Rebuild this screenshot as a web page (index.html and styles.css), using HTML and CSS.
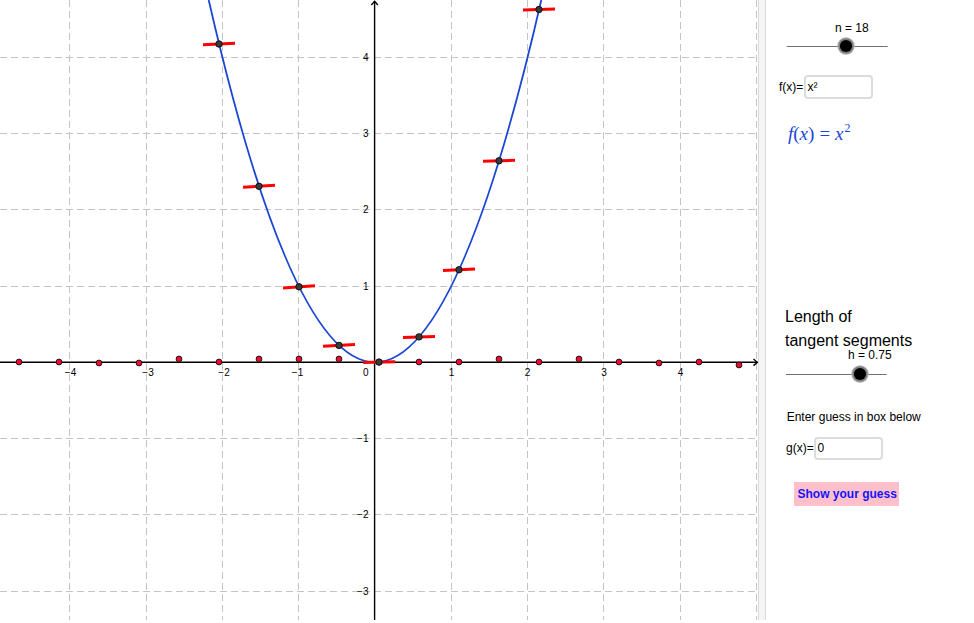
FILE: index.html
```html
<!DOCTYPE html>
<html>
<head>
<meta charset="utf-8">
<link rel="stylesheet" href="styles.css">
</head>
<body>
<div class="app">
  <div class="graph">
    <svg width="758" height="620" viewBox="0 0 758 620" xmlns="http://www.w3.org/2000/svg">
      <g class="grid">
        <line x1="69.5" y1="0" x2="69.5" y2="620"/>
        <line x1="146.5" y1="0" x2="146.5" y2="620"/>
        <line x1="222.5" y1="0" x2="222.5" y2="620"/>
        <line x1="298.5" y1="0" x2="298.5" y2="620"/>
        <line x1="451.5" y1="0" x2="451.5" y2="620"/>
        <line x1="527.5" y1="0" x2="527.5" y2="620"/>
        <line x1="603.5" y1="0" x2="603.5" y2="620"/>
        <line x1="680.5" y1="0" x2="680.5" y2="620"/>
        <line x1="756.5" y1="0" x2="756.5" y2="620"/>
        <line x1="0" y1="57.5" x2="758" y2="57.5"/>
        <line x1="0" y1="133.5" x2="758" y2="133.5"/>
        <line x1="0" y1="209.5" x2="758" y2="209.5"/>
        <line x1="0" y1="286.5" x2="758" y2="286.5"/>
        <line x1="0" y1="438.5" x2="758" y2="438.5"/>
        <line x1="0" y1="514.5" x2="758" y2="514.5"/>
        <line x1="0" y1="591.5" x2="758" y2="591.5"/>
      </g>
      <g class="axes">
        <line x1="0" y1="362.3" x2="757.5" y2="362.3"/>
        <line x1="374.6" y1="1" x2="374.6" y2="620"/>
        <polyline points="371.3,5 374.6,1.4 377.9,5"/>
        <polyline points="753.5,359 757.4,362.3 753.5,365.6"/>
      </g>
      <g class="ticks">
        <text x="70.5" y="376" text-anchor="middle">−4</text>
        <text x="148" y="376" text-anchor="middle">−3</text>
        <text x="224" y="376" text-anchor="middle">−2</text>
        <text x="297.5" y="376" text-anchor="middle">−1</text>
        <text x="368.5" y="376" text-anchor="end">0</text>
        <text x="451.5" y="376" text-anchor="middle">1</text>
        <text x="527.5" y="376" text-anchor="middle">2</text>
        <text x="604" y="376" text-anchor="middle">3</text>
        <text x="680.5" y="376" text-anchor="middle">4</text>
        <text x="368.5" y="61" text-anchor="end">4</text>
        <text x="368.5" y="137" text-anchor="end">3</text>
        <text x="368.5" y="213.2" text-anchor="end">2</text>
        <text x="368.5" y="289.5" text-anchor="end">1</text>
        <text x="368.5" y="442" text-anchor="end">−1</text>
        <text x="368.5" y="518.4" text-anchor="end">−2</text>
        <text x="368.5" y="594.7" text-anchor="end">−3</text>
      </g>
      <path class="curve" d="M208.7,0 Q375,724.6 541.3,0"/>
      <g class="segs">
        <line x1="203" y1="44.7" x2="235" y2="43.3"/>
        <line x1="243" y1="187.3" x2="275" y2="185.3"/>
        <line x1="283" y1="287.9" x2="315" y2="285.7"/>
        <line x1="323" y1="346.2" x2="355" y2="344.5"/>
        <line x1="363.2" y1="362.5" x2="395.2" y2="361.8"/>
        <line x1="403" y1="337.4" x2="435" y2="336.4"/>
        <line x1="443" y1="270.5" x2="475" y2="269.1"/>
        <line x1="483" y1="161.3" x2="515" y2="160.3"/>
        <line x1="523" y1="10" x2="555" y2="9"/>
      </g>
      <g class="rdots">
        <circle cx="19" cy="362" r="2.9"/>
        <circle cx="59" cy="362" r="2.9"/>
        <circle cx="99" cy="363" r="2.9"/>
        <circle cx="139" cy="363" r="2.9"/>
        <circle cx="179" cy="359" r="2.9"/>
        <circle cx="219" cy="362" r="2.9"/>
        <circle cx="259" cy="359" r="2.9"/>
        <circle cx="299" cy="359" r="2.9"/>
        <circle cx="339" cy="359" r="2.9"/>
        <circle cx="379" cy="362" r="2.9"/>
        <circle cx="419" cy="362" r="2.9"/>
        <circle cx="459" cy="362" r="2.9"/>
        <circle cx="499" cy="359" r="2.9"/>
        <circle cx="539" cy="362" r="2.9"/>
        <circle cx="579" cy="359" r="2.9"/>
        <circle cx="619" cy="362" r="2.9"/>
        <circle cx="659" cy="363" r="2.9"/>
        <circle cx="699" cy="362" r="2.9"/>
        <circle cx="739" cy="365" r="2.9"/>
      </g>
      <g class="bdots">
        <circle cx="219" cy="44" r="3.2"/>
        <circle cx="259" cy="186.3" r="3.2"/>
        <circle cx="299" cy="286.8" r="3.2"/>
        <circle cx="339" cy="345.4" r="3.2"/>
        <circle cx="379" cy="362.1" r="3.2"/>
        <circle cx="419" cy="336.9" r="3.2"/>
        <circle cx="459" cy="269.8" r="3.2"/>
        <circle cx="499" cy="160.8" r="3.2"/>
        <circle cx="539" cy="9.5" r="3.2"/>
      </g>
    </svg>
  </div>
  <div class="divider"></div>
  <div class="panel">
    <div class="label n-label">n = 18</div>
    <svg class="slider n-slider" width="106" height="20" viewBox="0 0 106 20" xmlns="http://www.w3.org/2000/svg">
      <line class="track" x1="2.7" y1="10.5" x2="103.7" y2="10.5"/>
      <circle cx="62" cy="10" r="8.7" fill="#b4b4b4"/>
      <circle cx="62" cy="10" r="7.7" fill="#7f7f7f"/>
      <circle cx="62" cy="10" r="6.1" fill="#000"/>
    </svg>
    <div class="inrow f-row">
      <span class="label">f(x)=</span>
      <div class="box">x²</div>
    </div>
    <div class="math"><i>f</i>(<i>x</i>)<span class="eq">=</span><i>x</i><sup>2</sup></div>
    <div class="title">Length of<br>tangent segments</div>
    <div class="label h-label">h = 0.75</div>
    <svg class="slider h-slider" width="106" height="20" viewBox="0 0 106 20" xmlns="http://www.w3.org/2000/svg">
      <line class="track" x1="2" y1="10.5" x2="102.7" y2="10.5"/>
      <circle cx="76" cy="10" r="8.7" fill="#b4b4b4"/>
      <circle cx="76" cy="10" r="7.7" fill="#7f7f7f"/>
      <circle cx="76" cy="10" r="6.1" fill="#000"/>
    </svg>
    <div class="label enter">Enter guess in box below</div>
    <div class="inrow g-row">
      <span class="label">g(x)=</span>
      <div class="box">0</div>
    </div>
    <div class="button">Show your guess</div>
  </div>
</div>
</body>
</html>
```
FILE: styles.css
```css
html, body {
  margin: 0;
  padding: 0;
  background: #fff;
}
body {
  width: 974px;
  height: 623px;
  overflow: hidden;
  font-family: "Liberation Sans", Arial, sans-serif;
  color: #000;
}
.app {
  display: flex;
  height: 620px;
}
.graph {
  width: 758px;
  height: 620px;
  flex: none;
}
.graph svg {
  display: block;
}
.grid line {
  stroke: #c4c4c4;
  stroke-width: 1;
  stroke-dasharray: 7 4;
}
.axes line, .axes polyline {
  stroke: #000;
  stroke-width: 1.4;
  fill: none;
}
.ticks text {
  font-family: "Liberation Sans", Arial, sans-serif;
  font-size: 10px;
  fill: #000;
}
.curve {
  fill: none;
  stroke: #1c46d4;
  stroke-width: 1.8;
}
.segs line {
  stroke: #ff0000;
  stroke-width: 3;
}
.rdots circle {
  fill: #ff0030;
  stroke: #1a1a1a;
  stroke-width: 1;
}
.bdots circle {
  fill: #3a3a3a;
  stroke: #111;
  stroke-width: 1;
}
.divider {
  width: 8px;
  height: 620px;
  flex: none;
  box-sizing: border-box;
  background: #f5f5f5;
  border-left: 1px solid #dadada;
  border-right: 1px solid #dadada;
}
.panel {
  flex: 1;
  display: flex;
  flex-direction: column;
  align-items: flex-start;
}
.label {
  font-size: 12px;
  line-height: 14px;
  white-space: nowrap;
}
.n-label {
  margin-top: 20.5px;
  margin-left: 69px;
}
.slider {
  display: block;
  flex: none;
}
.track {
  stroke: #707070;
  stroke-width: 1;
}
.n-slider {
  margin-top: 1.5px;
  margin-left: 18px;
}
.inrow {
  display: flex;
  align-items: center;
}
.box {
  box-sizing: border-box;
  width: 69px;
  height: 24px;
  border: 2px solid #dcdcdc;
  border-radius: 4px;
  font-size: 12px;
  line-height: 20px;
  padding-left: 1.5px;
  background: #fff;
}
.f-row {
  margin-top: 19px;
  margin-left: 13px;
}
.f-row .label {
  width: 25px;
}
.math {
  margin-top: 24px;
  margin-left: 22px;
  font-family: "Liberation Serif", "Times New Roman", serif;
  font-size: 19px;
  line-height: 22px;
  color: #1c46d4;
  white-space: nowrap;
}
.math .eq {
  margin: 0 5px;
}
.math sup {
  font-size: 12px;
  line-height: 0;
  vertical-align: 8px;
  margin-left: 1px;
}
.title {
  margin-top: 160px;
  margin-left: 19px;
  font-size: 16px;
  line-height: 24px;
  white-space: nowrap;
}
.h-label {
  margin-top: -5.2px;
  margin-left: 82px;
}
.h-slider {
  margin-top: 2.2px;
  margin-left: 18px;
}
.enter {
  margin-top: 25.5px;
  margin-left: 20.7px;
}
.g-row {
  margin-top: 13px;
  margin-left: 20px;
}
.g-row .label {
  width: 28px;
}
.g-row .box {
  height: 23px;
  line-height: 19px;
}
.button {
  margin-top: 22px;
  margin-left: 28px;
  width: 105px;
  height: 24px;
  box-sizing: border-box;
  padding-left: 3.5px;
  background: #ffc0cb;
  color: #1414ff;
  font-weight: bold;
  font-size: 12px;
  line-height: 24px;
  white-space: nowrap;
}
```
